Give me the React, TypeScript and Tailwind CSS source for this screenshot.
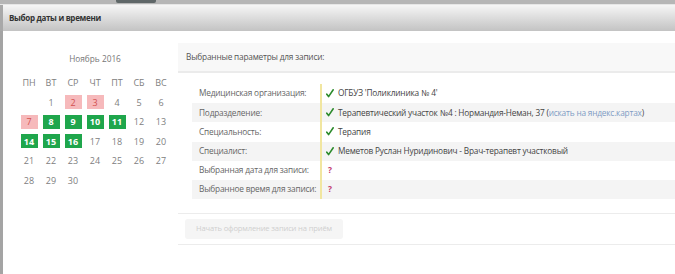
import React from "react";

const Check = () => (
  <svg width="8" height="9" viewBox="0 0 8 9" className="shrink-0">
    <path d="M0.8 5.2 L2.6 7.6 L7.2 0.8" fill="none" stroke="#2b8a2b" strokeWidth="1.6" strokeLinecap="round" strokeLinejoin="round" />
  </svg>
);

type Row = { label: string; value?: React.ReactNode };

const rows: Row[] = [
  { label: "Медицинская организация:", value: "ОГБУЗ 'Поликлиника № 4'" },
  {
    label: "Подразделение:",
    value: (
      <>
        Терапевтический участок №4 : Нормандия-Неман, 37 (
        <span className="text-[#7f9cc4]">искать на яндекс.картах</span>)
      </>
    ),
  },
  { label: "Специальность:", value: "Терапия" },
  { label: "Специалист:", value: "Меметов Руслан Нуридинович - Врач-терапевт участковый" },
  { label: "Выбранная дата для записи:" },
  { label: "Выбранное время для записи:" },
];

const days: { d: string; t?: "pink" | "green" }[] = [
  { d: "" },
  { d: "1" },
  { d: "2", t: "pink" },
  { d: "3", t: "pink" },
  { d: "4" },
  { d: "5" },
  { d: "6" },
  { d: "7", t: "pink" },
  { d: "8", t: "green" },
  { d: "9", t: "green" },
  { d: "10", t: "green" },
  { d: "11", t: "green" },
  { d: "12" },
  { d: "13" },
  { d: "14", t: "green" },
  { d: "15", t: "green" },
  { d: "16", t: "green" },
  { d: "17" },
  { d: "18" },
  { d: "19" },
  { d: "20" },
  { d: "21" },
  { d: "22" },
  { d: "23" },
  { d: "24" },
  { d: "25" },
  { d: "26" },
  { d: "27" },
  { d: "28" },
  { d: "29" },
  { d: "30" },
];

export default function App() {
  return (
    <div className="w-[675px] h-[274px] overflow-hidden bg-white flex flex-col" style={{ fontFamily: "'Open Sans', sans-serif" }}>
      {/* top strip */}
      <div className="h-[4px] bg-[#b6b6b6] flex shrink-0">
        <div className="ml-[116px] w-[40px] h-[3px] bg-[#5f6768] rounded-b-[2px]" />
      </div>
      <div className="h-[1px] bg-[#e6e6e6] shrink-0" />
      {/* header */}
      <div className="h-[26px] shrink-0 flex items-center pl-[6px] border-l-[3px] border-[#a8a8a8] bg-gradient-to-b from-[#f6f6f6] to-[#c3c3c3]">
        <span className="text-[8px] font-bold text-[#333] tracking-[-0.3px]">Выбор даты и времени</span>
      </div>
      {/* body */}
      <div className="flex-1 flex border-l-[3px] border-[#a4a4a4]">
        {/* calendar */}
        <div className="w-[175px] shrink-0 pl-[15px] pt-[21px]">
          <div className="w-[154px] text-center text-[8.3px] text-[#777] leading-[14px]">Ноябрь 2016</div>
          <div className="grid grid-cols-[repeat(7,22px)] auto-rows-[19.5px] mt-[7px] text-[9px] text-[#808080]">
            {["ПН", "ВТ", "СР", "ЧТ", "ПТ", "СБ", "ВС"].map((h) => (
              <div key={h} className="flex items-center justify-center">{h}</div>
            ))}
            {days.map((x, i) => (
              <div key={i} className="flex items-center justify-center">
                {x.d && (
                  <div
                    className={
                      "w-[17px] h-[14px] flex items-center justify-center " +
                      (x.t === "green"
                        ? "bg-[#1fa64c] text-white font-bold"
                        : x.t === "pink"
                        ? "bg-[#f6b9bb] text-[#d2504f]"
                        : "")
                    }
                  >
                    {x.d}
                  </div>
                )}
              </div>
            ))}
          </div>
        </div>
        {/* right panel */}
        <div className="flex-1 pt-[12px] min-w-0">
          <div className="h-[30px] bg-[#f8f8f8] border-b-[2px] border-[#ebebeb] flex items-center pl-[8px] text-[8.3px] tracking-[-0.2px] text-[#555]">
            Выбранные параметры для записи:
          </div>
          <div className="ml-[14px] mt-[11px] text-[8.3px] tracking-[-0.2px] whitespace-nowrap">
            {rows.map((r, i) => (
              <div key={i} className={"flex h-[19.2px] items-center " + (i % 2 === 1 ? "bg-[#f4f4f4]" : "bg-white")}>
                <div className="w-[128px] pl-[7px] text-[#666] shrink-0">{r.label}</div>
                <div className="w-[2px] self-stretch bg-[#f1e6a0] shrink-0" />
                <div className="pl-[4px] flex items-center gap-[4px] text-[#444]">
                  {r.value ? (
                    <>
                      <Check />
                      <span>{r.value}</span>
                    </>
                  ) : (
                    <span className="text-[#c23a6b] font-bold ml-[2px]">?</span>
                  )}
                </div>
              </div>
            ))}
          </div>
          <div className="mt-[14px] h-[1px] bg-[#ececec]" />
          <div className="py-[5px] pl-[7px]">
            <div className="w-[158px] h-[20px] rounded-[3px] bg-[#f5f5f5] flex items-center justify-center text-[7.6px] tracking-[-0.15px] text-[#cfcfcf]">
              Начать оформление записи на приём
            </div>
          </div>
          <div className="h-[1px] bg-[#ececec]" />
        </div>
      </div>
    </div>
  );
}
